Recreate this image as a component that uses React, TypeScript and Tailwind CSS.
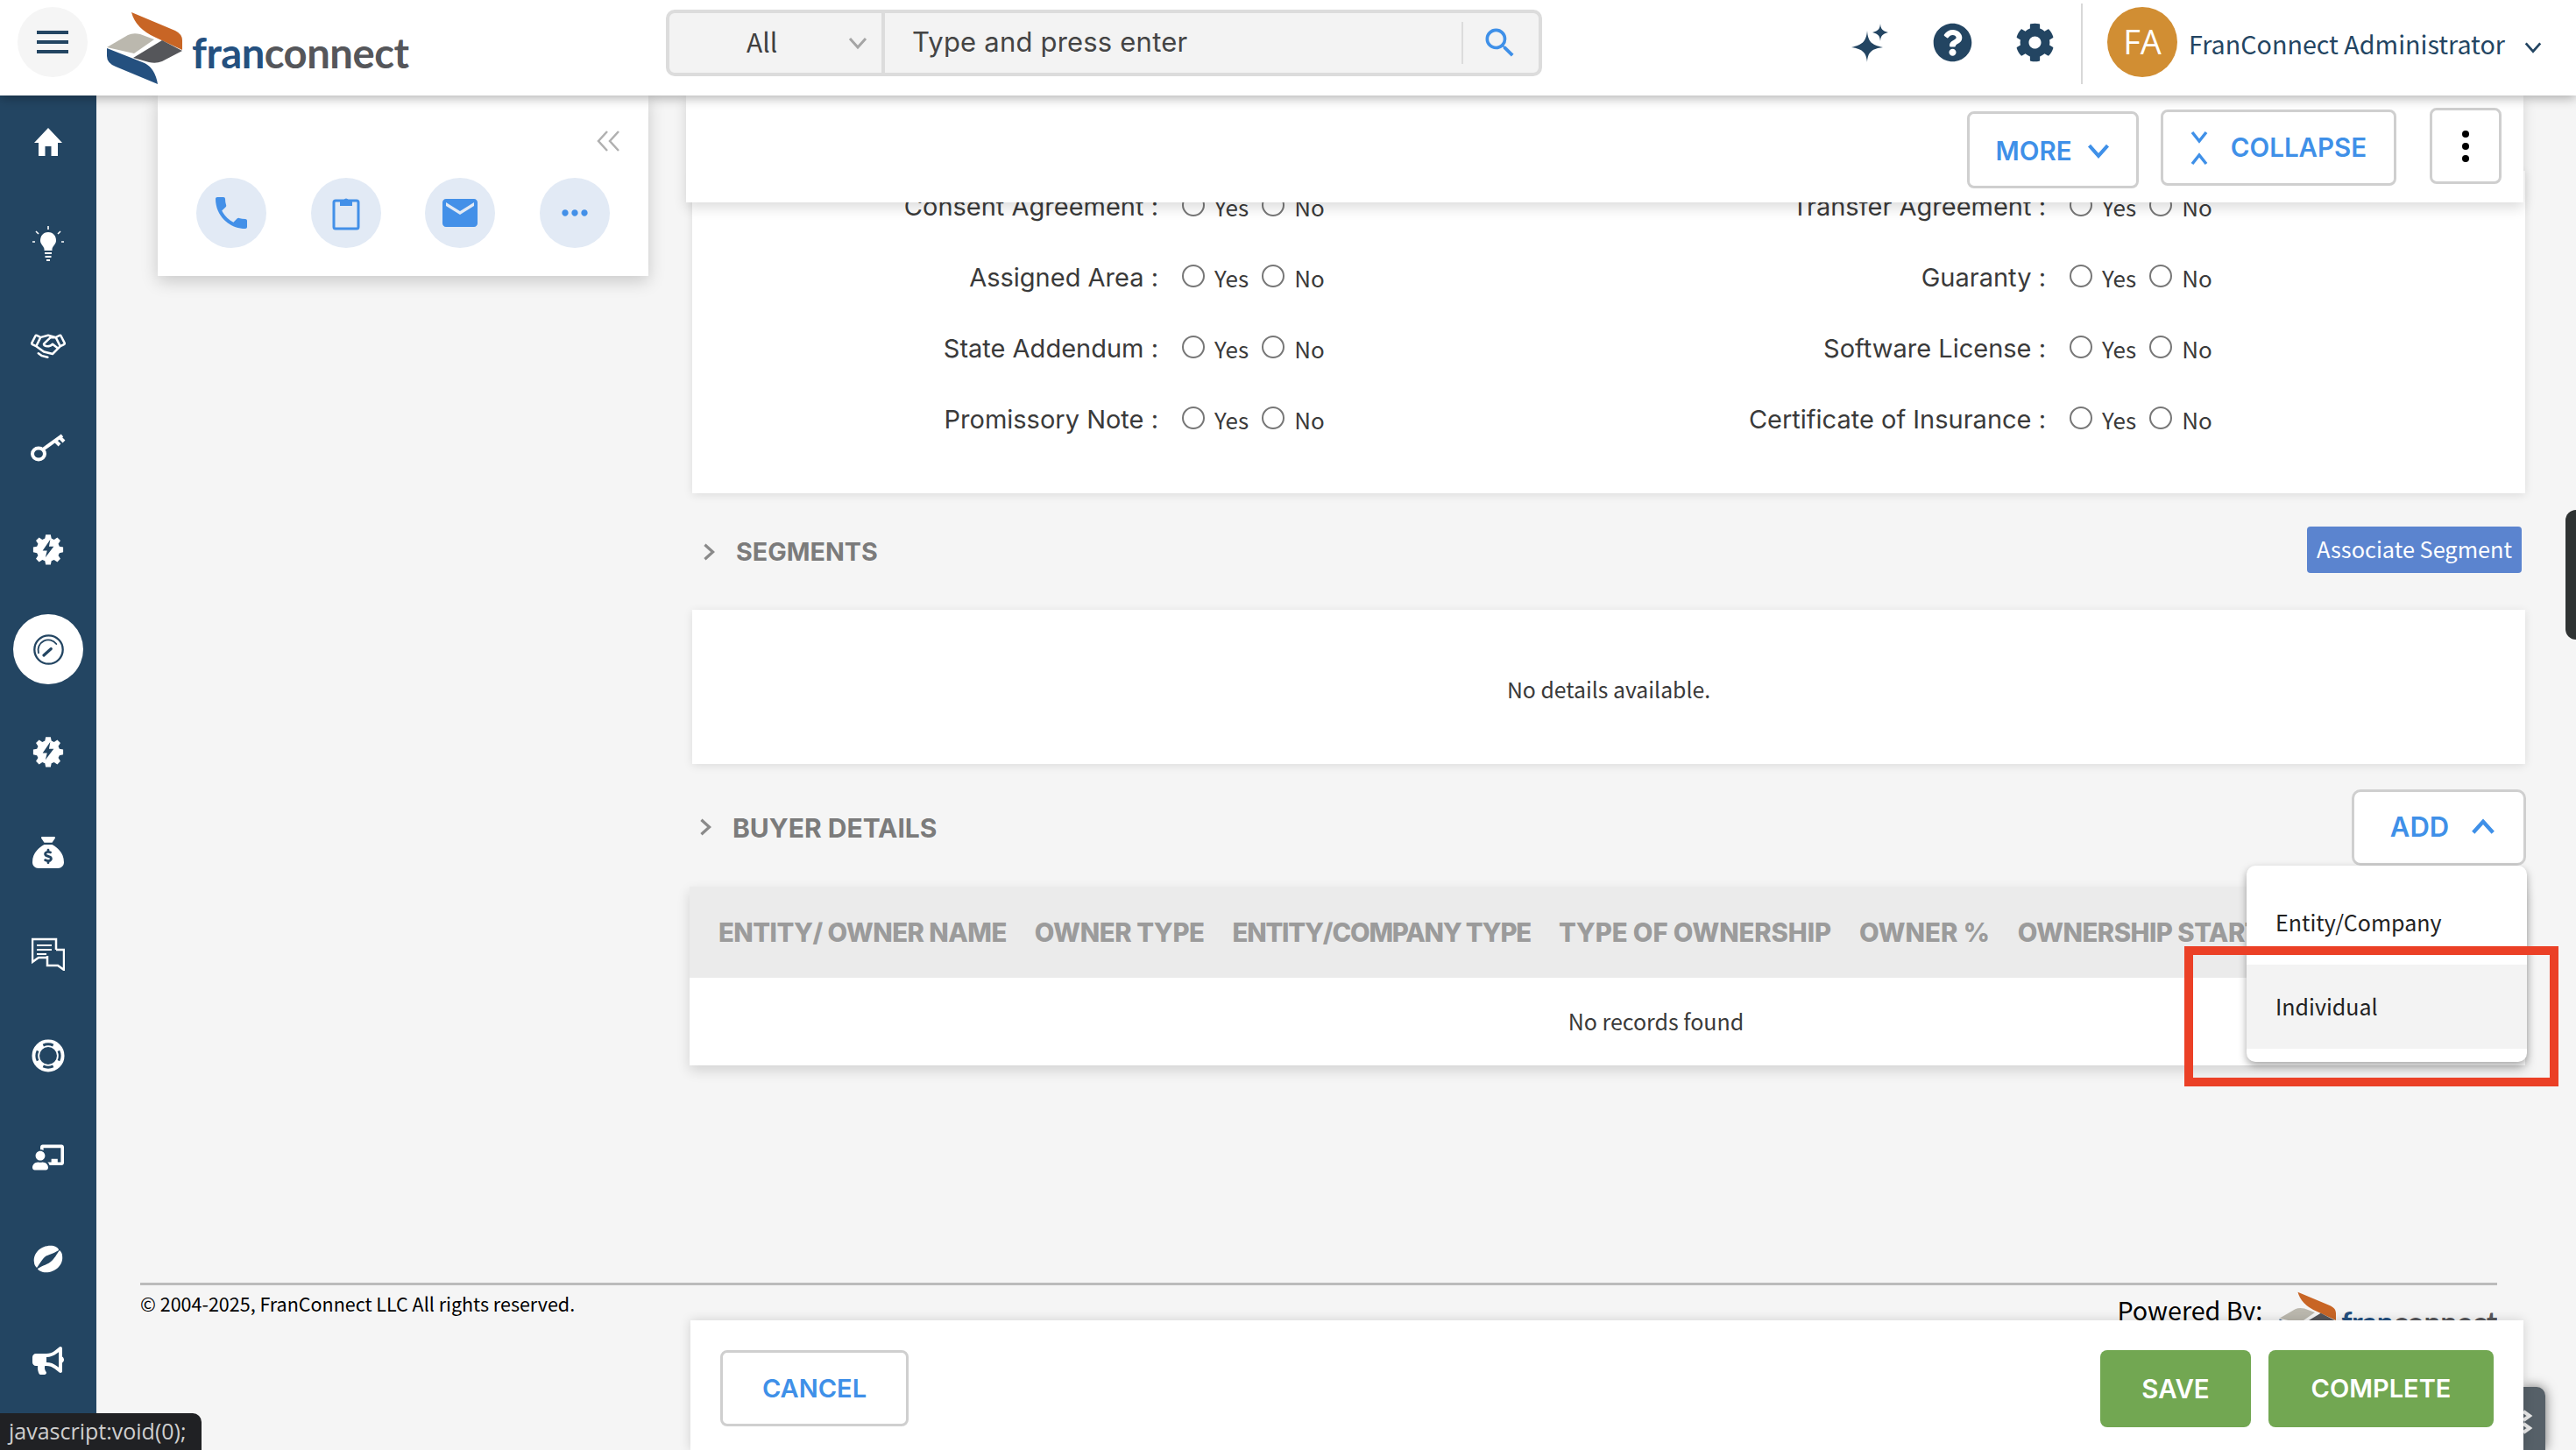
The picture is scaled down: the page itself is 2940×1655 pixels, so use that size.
import React from "react";
import { FaCog, FaQuestionCircle, FaChalkboardTeacher, FaBullhorn } from "react-icons/fa";
import { FaSackDollar } from "react-icons/fa6";
import { MdPhone, MdEmail, MdMoreHoriz, MdSearch } from "react-icons/md";
import { PiHandshake } from "react-icons/pi";

const SANS = "font-['Noto_Sans_CJK_JP','Noto_Sans',sans-serif]";
const MONT = "font-['Inter','Open_Sans',sans-serif]";

function LogoMark({ className }: { className?: string }) {
  return (
    <svg viewBox="120 14 92 86" className={className}>
      <path d="M150 16 L200 37 Q208 41 208 48 L208 59 L178 45 Q155 35 150 16 Z" fill="#c86525" />
      <path d="M122 56 L146 42 Q152 39 160 41 L176 47 L153 63 Z" fill="#bbb8ae" />
      <path d="M185 48 L208 60 L185 72 Q178 75 170 73 L152 68 Z" fill="#55565a" />
      <path d="M122 57 L165 74 Q177 80 180 98 L132 78 Q122 74 122 66 Z" fill="#24507f" />
    </svg>
  );
}

function Chevron({ dir, className, sw = 3 }: { dir: "down" | "up" | "right"; className?: string; sw?: number }) {
  const d = dir === "down" ? "M3 7 L12 17 L21 7" : dir === "up" ? "M3 17 L12 7 L21 17" : "M7 3 L17 12 L7 21";
  return (
    <svg viewBox="0 0 24 24" fill="none" stroke="currentColor" strokeWidth={sw} className={className}>
      <path d={d} />
    </svg>
  );
}

function GearBolt() {
  return (
    <svg viewBox="0 0 24 24" className="w-[38px] h-[38px]">
      <path
        fill="#fff"
        d="M10 1h4l.6 3 2.1.9 2.6-1.7 2.5 2.5-1.7 2.6.9 2.1 3 .6v4l-3 .6-.9 2.1 1.7 2.6-2.5 2.5-2.6-1.7-2.1.9-.6 3h-4l-.6-3-2.1-.9-2.6 1.7-2.5-2.5 1.7-2.6-.9-2.1-3-.6v-4l3-.6.9-2.1-1.7-2.6 2.500-2.500 2.6 1.7 2.1-.9z"
        transform="translate(1.2 1.2) scale(0.9)"
      />
      <path fill="#234562" d="M13.5 5.5 8 13.5h3.2L10 18.5l6-8h-3.4z" />
    </svg>
  );
}

function SidebarIcons() {
  const cell = "h-[115.900px] flex items-center justify-center shrink-0";
  return (
    <div className="w-[110px] shrink-0 bg-[#234562] flex flex-col items-center relative z-20 overflow-hidden">
      <div className="flex flex-col items-center -mt-[5px] w-full">
        <div className={cell}>
          <svg viewBox="0 0 34 34" className="w-[34px] h-[34px]" fill="#fff">
            <path d="M17 1 L33 18 L28 18 L28 33 L20.5 33 L20.5 22 L13.5 22 L13.5 33 L6 33 L6 18 L1 18 Z" />
          </svg>
        </div>
        <div className={cell}>
          <svg viewBox="0 0 36 40" className="w-[36px] h-[40px]" fill="none" stroke="#fff" strokeWidth="1.6">
            <path d="M18 0v4M4 6l3 3M32 6l-3 3M0 18h3M33 18h3" />
            <path fill="#fff" stroke="none" d="M18 7c-6 0-9 4.500-9 9.500 0 4 3.500 6 4.500 9.500v2h9v-2c1-3.500 4.500-5.500 4.500-9.500C27 11.500 24 7 18 7z" />
            <path stroke="#fff" strokeWidth="2" d="M14 31h8M14.500 35h7M16 39h4" />
          </svg>
        </div>
        <div className={cell}><PiHandshake className="text-white w-[40px] h-[40px]" /></div>
        <div className={cell}>
          <svg viewBox="0 0 40 34" className="w-[40px] h-[34px]" fill="none" stroke="#fff" strokeWidth="4">
            <ellipse cx="9" cy="25" rx="7" ry="6.500" />
            <path d="M14 20 L36 4 M28 10 L33 15 M33 6 L38 11" />
          </svg>
        </div>
        <div className={cell}><GearBolt /></div>
        <div className={cell}>
          <div className="w-[80px] h-[80px] rounded-full bg-white flex items-center justify-center">
            <svg viewBox="0 0 40 40" className="w-[37px] h-[37px]" fill="none" stroke="#234562" strokeWidth="2.500" strokeLinecap="round">
              <circle cx="20" cy="20" r="17.500" />
              <path d="M7.500 24a12.500 12.500 0 0 1 22-11" strokeWidth="2" />
              <path d="M14 27l9-8" strokeWidth="3.500" />
            </svg>
          </div>
        </div>
        <div className={cell}><GearBolt /></div>
        <div className={cell}><FaSackDollar className="text-white w-[36px] h-[36px]" /></div>
        <div className={cell}>
          <svg viewBox="0 0 38 38" className="w-[38px] h-[38px]" fill="none" stroke="#fff" strokeWidth="2.500">
            <path d="M28 14V2H1v26l7-5h10" />
            <path d="M6 9h17M6 14h17M6 19h11" strokeWidth="2" />
            <path d="M28 14h9v23l-7-5H18V21" />
          </svg>
        </div>
        <div className={cell}>
          <svg viewBox="0 0 40 40" className="w-[38px] h-[38px]" fill="none">
            <circle cx="20" cy="20" r="15" stroke="#fff" strokeWidth="9" />
            <path d="M14 7.500 A14 14 0 0 1 26 7.500 M14 32.500 A14 14 0 0 0 26 32.500 M7.500 14 A14 14 0 0 0 7.500 26 M32.500 14 A14 14 0 0 1 32.500 26" stroke="#234562" strokeWidth="3" />
          </svg>
        </div>
        <div className={cell}><FaChalkboardTeacher className="text-white w-[36px] h-[36px]" /></div>
        <div className={cell}>
          <svg viewBox="0 0 36 36" className="w-[36px] h-[36px]" fill="#fff">
            <path d="M2 22 C0 10 12 1 24 3 C28 4 30 6 30 8 C24 12 18 13 15 15 C11 18 8 24 5 28 C3 26 2 24 2 22 Z" />
            <path d="M34 14 C36 26 24 35 12 33 C8 32 6 30 6 29 C12 25 18 24 21 21 C25 18 28 12 31 8 C33 10 34 12 34 14 Z" />
          </svg>
        </div>
        <div className={cell}><FaBullhorn className="text-white w-[36px] h-[36px]" /></div>
      </div>
    </div>
  );
}

function Header() {
  return (
    <header className="h-[109px] shrink-0 bg-white relative z-30 flex items-center shadow-[0_3px_12px_rgba(0,0,0,0.3)]">
      <div className="ml-[20px] w-[80px] h-[80px] rounded-full bg-[#f5f5f5] flex flex-col items-center justify-center gap-[7px] -mt-[14px] shrink-0">
        <span className="block w-[36px] h-[4px] bg-[#234562]" />
        <span className="block w-[36px] h-[4px] bg-[#234562]" />
        <span className="block w-[36px] h-[4px] bg-[#234562]" />
      </div>
      <div className="ml-[20px] w-[640px] flex items-center shrink-0">
        <LogoMark className="w-[92px] h-[86px]" />
        <span className="ml-[7px] mt-[10px] text-[47.200px] leading-none font-['Lato',sans-serif] font-bold tracking-[-0.5px] text-[#55565a]">
          <span className="text-[#24507f]">fran</span>connect
        </span>
      </div>
      <div className="w-[1000px] h-[76px] -mt-[12px] border-[4px] border-[#dcdcdc] rounded-[10px] bg-[#f3f3f3] flex items-center shrink-0">
        <div className="w-[246px] h-full border-r-[4px] border-[#dcdcdc] flex items-center relative shrink-0">
          <span className={`ml-[88px] text-[30px] text-[#3f3f3f] -mt-[2px] ${SANS}`}>All</span>
          <Chevron dir="down" className="w-[24px] h-[24px] text-[#a5a5a5] ml-[80px]" />
        </div>
        <span className={`ml-[31px] text-[31px] text-[#444] tracking-[0.2px] ${MONT}`}>Type and press enter</span>
        <span className="ml-auto mr-[2px] w-[2px] h-[48px] bg-[#dcdcdc]" />
        <MdSearch className="text-[#3f90e8] w-[44px] h-[44px] ml-[18px] mr-[22px]" />
      </div>
      <svg viewBox="0 0 42 44" className="w-[42px] h-[44px] ml-[353px] -mt-[12px] shrink-0" fill="#234562">
        <path d="M18 8 C19 20 22 24 36 27 C22 29 19 33 18 44 C17 33 13 29 0 27 C13 24 17 20 18 8 Z" />
        <path d="M33 0 C33.500 6 35 8 42 10 C35 12 33.500 14 33 20 C32.500 14 31 12 24 10 C31 8 32.500 6 33 0 Z" />
      </svg>
      <FaQuestionCircle className="text-[#234562] w-[45px] h-[45px] ml-[51px] -mt-[12px] shrink-0" />
      <FaCog className="text-[#234562] w-[45px] h-[45px] ml-[49px] -mt-[12px] shrink-0" />
      <span className="w-[2px] h-[92px] bg-[#d8d8d8] ml-[30px] -mt-[10px] shrink-0" />
      <div className={`w-[80px] h-[80px] rounded-full bg-[#d18e33] text-white text-[38px] flex items-center justify-center ml-[28px] -mt-[14px] shrink-0 font-['Open_Sans',sans-serif]`}>FA</div>
      <span className={`ml-[13px] -mt-[9px] text-[28.700px] leading-none text-[#234562] whitespace-nowrap ${SANS}`}>FranConnect Administrator</span>
      <Chevron dir="down" className="w-[22px] h-[22px] ml-[21px] -mt-[1px] text-[#234562] shrink-0" />
    </header>
  );
}

function LeftPanel() {
  const items = [
    <MdPhone key="p" className="w-[48px] h-[48px]" />,
    <svg key="a" viewBox="0 0 32 40" className="w-[32px] h-[40px]" fill="none" stroke="currentColor" strokeWidth="3">
      <rect x="2" y="6" width="28" height="32" rx="2" />
      <path fill="currentColor" stroke="none" d="M9 5h4.500a2.800 2.800 0 0 1 5 0H23v7H9z" />
    </svg>,
    <MdEmail key="e" className="w-[48px] h-[48px]" />,
    <MdMoreHoriz key="m" className="w-[44px] h-[44px]" />,
  ];
  return (
    <aside className="ml-[70px] w-[560px] h-[206px] bg-white shadow-[0_6px_18px_rgba(0,0,0,0.18)] shrink-0 flex flex-col">
      <div className="flex justify-end pt-[40px] pr-[31px] h-[94px] text-[#b0b0b0]">
        <svg viewBox="0 0 28 24" className="w-[30px] h-[24px]" fill="none" stroke="currentColor" strokeWidth="2.500">
          <path d="M13 1 L3 12 L13 23 M26 1 L16 12 L26 23" />
        </svg>
      </div>
      <div className="flex pl-[44px] gap-[50.500px]">
        {items.map((it, i) => (
          <div key={i} className="w-[80px] h-[80px] rounded-full bg-[#e2eaf5] text-[#4390e8] flex items-center justify-center">{it}</div>
        ))}
      </div>
    </aside>
  );
}

function OutlineBtn({ children, className }: { children: React.ReactNode; className?: string }) {
  return (
    <button className={`bg-white border-[3px] border-[#cfcfcf] rounded-[8px] text-[#3f90e8] font-semibold flex items-center justify-center ${MONT} ${className ?? ""}`}>
      {children}
    </button>
  );
}

function Row({ label }: { label: string }) {
  const opt = (t: string) => (
    <>
      <input type="radio" name={label} className="appearance-none w-[26px] h-[26px] rounded-full border-2 border-[#777] bg-white shrink-0 -mt-[4px]" />
      <span className={`ml-[11px] text-[26px] leading-none text-[#3a3a3a] ${SANS}`}>{t}</span>
    </>
  );
  return (
    <div className="w-[1013px] h-[81px] flex items-center">
      <span className={`w-[532px] text-right text-[29px] leading-none text-[#3a3a3a] whitespace-nowrap ${MONT}`}>{label}</span>
      <span className="w-[27px]" />
      {opt("Yes")}
      <span className="w-[15px]" />
      {opt("No")}
    </div>
  );
}

const rows: [string, string][] = [
  ["Consent Agreement :", "Transfer Agreement :"],
  ["Assigned Area :", "Guaranty :"],
  ["State Addendum :", "Software License :"],
  ["Promissory Note :", "Certificate of Insurance :"],
];

const cols: [string, string][] = [
  ["ENTITY/ OWNER NAME", "tracking-[-0.5px]"],
  ["OWNER TYPE", "tracking-[-0.4px]"],
  ["ENTITY/COMPANY TYPE", "tracking-[-1.2px]"],
  ["TYPE OF OWNERSHIP", "tracking-[-0.1px]"],
  ["OWNER %", "tracking-[0px]"],
  ["OWNERSHIP START", "tracking-[-0.5px]"],
];

function Main() {
  return (
    <main className="ml-[43px] w-[2099px] shrink-0 flex flex-col">
      <div className="w-[2097px] h-[122px] bg-white relative z-10 shadow-[0_6px_14px_rgba(0,0,0,0.14)] flex items-start shrink-0">
        <OutlineBtn className="ml-[1462px] mt-[18px] w-[196px] h-[88px] pt-[2px] text-[29.500px] gap-[16px]">
          MORE <Chevron dir="down" className="w-[28px] h-[28px]" sw={3.500} />
        </OutlineBtn>
        <OutlineBtn className="ml-[25px] mt-[16px] w-[269px] h-[87px] text-[29.500px] gap-[26px]">
          <svg viewBox="0 0 20 40" className="w-[20px] h-[40px]" fill="none" stroke="currentColor" strokeWidth="3.500">
            <path d="M2 2 L10 12 L18 2 M2 38 L10 28 L18 38" />
          </svg>
          COLLAPSE
        </OutlineBtn>
        <OutlineBtn className="ml-[38px] mt-[14px] w-[82px] h-[87px] gap-[6px] flex-col">
          <span className="w-[8px] h-[8px] rounded-full bg-black" />
          <span className="w-[8px] h-[8px] rounded-full bg-black" />
          <span className="w-[8px] h-[8px] rounded-full bg-black" />
        </OutlineBtn>
      </div>

      <div className="ml-[7px] w-[2092px] -mt-[36px] bg-white pb-[44px] shadow-[0_2px_10px_rgba(0,0,0,0.1)] shrink-0 grid grid-cols-[1013px_1013px]">
        {rows.map(([a, b]) => (
          <React.Fragment key={a}>
            <Row label={a} />
            <Row label={b} />
          </React.Fragment>
        ))}
      </div>

      <div className="ml-[15px] h-[133px] flex items-center shrink-0">
        <Chevron dir="right" className="w-[22px] h-[28px] text-[#8a8a8a]" sw={3.500} />
        <span className={`ml-[20px] text-[28.700px] font-bold text-[#7b7b7b] ${MONT}`}>SEGMENTS</span>
        <button className={`ml-auto mr-[4px] -mt-[5px] w-[245px] h-[53px] rounded-[4px] bg-[#5b84cf] text-white text-[25.300px] leading-none ${SANS}`}>Associate Segment</button>
      </div>

      <div className={`ml-[7px] w-[2092px] h-[176px] pt-[6px] bg-white shadow-[0_2px_10px_rgba(0,0,0,0.1)] flex items-center justify-center text-[24.800px] text-[#3a3a3a] shrink-0 ${SANS}`}>
        No details available.
      </div>

      <div className="ml-[11px] h-[140px] flex items-center shrink-0 relative z-20">
        <Chevron dir="right" className="w-[22px] h-[28px] text-[#8a8a8a] mt-[4px]" sw={3.500} />
        <span className={`ml-[20px] mt-[6px] text-[30px] font-bold text-[#7b7b7b] ${MONT}`}>BUYER DETAILS</span>
        <div className="ml-auto mr-[-1px] mt-[4px] relative">
          <OutlineBtn className="w-[199px] h-[87px] pl-[10px] text-[31px] font-medium gap-[24px] rounded-[10px]">
            ADD <Chevron dir="up" className="w-[30px] h-[30px]" sw={3.500} />
          </OutlineBtn>
          <div className={`absolute top-[87px] right-[-1px] w-[320px] h-[224px] pt-[17px] pb-[15px] bg-white rounded-[10px] shadow-[0_4px_10px_rgba(0,0,0,0.35)] z-30 text-[25px] text-[#222] ${SANS}`}>
            <div className="h-[96px] flex items-center pl-[33px]">Entity/Company</div>
            <div className="h-[96px] flex items-center pl-[33px] bg-[#f3f3f3]">Individual</div>
          </div>
        </div>
      </div>

      <div className="ml-[4px] w-[2095px] shrink-0 shadow-[0_6px_14px_rgba(0,0,0,0.14)] overflow-hidden">
        <div className="h-[104px] bg-[#ebebeb] flex items-center pl-[33px] gap-[32px] whitespace-nowrap">
          {cols.map(([c, t]) => (
            <span key={c} className={`mt-[2px] text-[29.300px] font-extrabold ${t} text-[#9b9b9b] ${MONT}`}>{c}</span>
          ))}
        </div>
        <div className={`h-[100px] bg-white flex items-center justify-center text-[25px] text-[#3a3a3a] pl-[111px] ${SANS}`}>No records found</div>
      </div>
    </main>
  );
}

function Footer() {
  return (
    <footer className="mt-auto ml-[50px] w-[2690px] h-[191px] border-t-[3px] border-[#bbb] flex justify-between items-start shrink-0 overflow-hidden">
      <span className={`mt-[5px] text-[21.500px] text-black whitespace-nowrap ${SANS}`}>© 2004-2025, FranConnect LLC All rights reserved.</span>
      <div className="flex items-start">
        <span className={`mt-[6px] text-[28.700px] text-black whitespace-nowrap ${SANS}`}>Powered By:</span>
        <LogoMark className="ml-[18px] mt-[6px] w-[69px] h-[65px]" />
        <span className="ml-[3px] mt-[25px] text-[34px] leading-none font-['Lato',sans-serif] font-bold tracking-[-0.4px] text-[#55565a]">
          <span className="text-[#24507f]">fran</span>connect
        </span>
      </div>
    </footer>
  );
}

export default function App() {
  return (
    <div className="w-[2940px] h-[1655px] relative overflow-hidden bg-[#f5f5f5] flex flex-col">
      <Header />
      <div className="flex flex-1 min-h-0">
        <SidebarIcons />
        <div className="flex-1 min-w-0 flex flex-col relative">
          <div className="flex items-start">
            <LeftPanel />
            <Main />
          </div>
          <Footer />
          <div className="absolute left-[2770px] bottom-0 w-[25px] h-[72px] bg-[#566068] rounded-tr-[10px] shadow-[0_0_14px_rgba(0,0,0,0.55)] overflow-hidden">
            <svg viewBox="0 0 25 72" className="w-[25px] h-[72px]" fill="none" stroke="#e8e8e8" strokeWidth="4">
              <path d="M0 28 L7 33 L0 38 M0 42 L7 47 L0 52" />
            </svg>
          </div>
          <div className="absolute left-[678px] bottom-0 w-[2092px] h-[148px] bg-white shadow-[0_0_12px_rgba(0,0,0,0.15)] flex items-start pt-[34px] z-10">
            <OutlineBtn className="ml-[34px] w-[215px] h-[87px] text-[29px]">CANCEL</OutlineBtn>
            <button className={`ml-auto w-[172px] h-[88px] rounded-[8px] bg-[#72a752] text-white text-[29.500px] font-semibold ${MONT}`}>SAVE</button>
            <button className={`ml-[20px] mr-[34px] w-[257px] h-[88px] rounded-[8px] bg-[#72a752] text-white text-[29px] font-semibold ${MONT}`}>COMPLETE</button>
          </div>
        </div>
      </div>
      <div className="absolute right-0 top-[582px] w-[12px] h-[148px] rounded-l-[20px] bg-[#2f3333]" />
      <div className="absolute left-[2493px] top-[1080px] w-[427px] h-[160px] border-[10px] border-[#eb4026] z-40" />
      <div className={`absolute left-0 bottom-0 h-[42px] w-[230px] bg-[#202124] rounded-tr-[10px] text-[#cfcfcf] text-[25px] pl-[10px] flex items-center z-50 font-['Open_Sans',sans-serif]`}>javascript:void(0);</div>
    </div>
  );
}
